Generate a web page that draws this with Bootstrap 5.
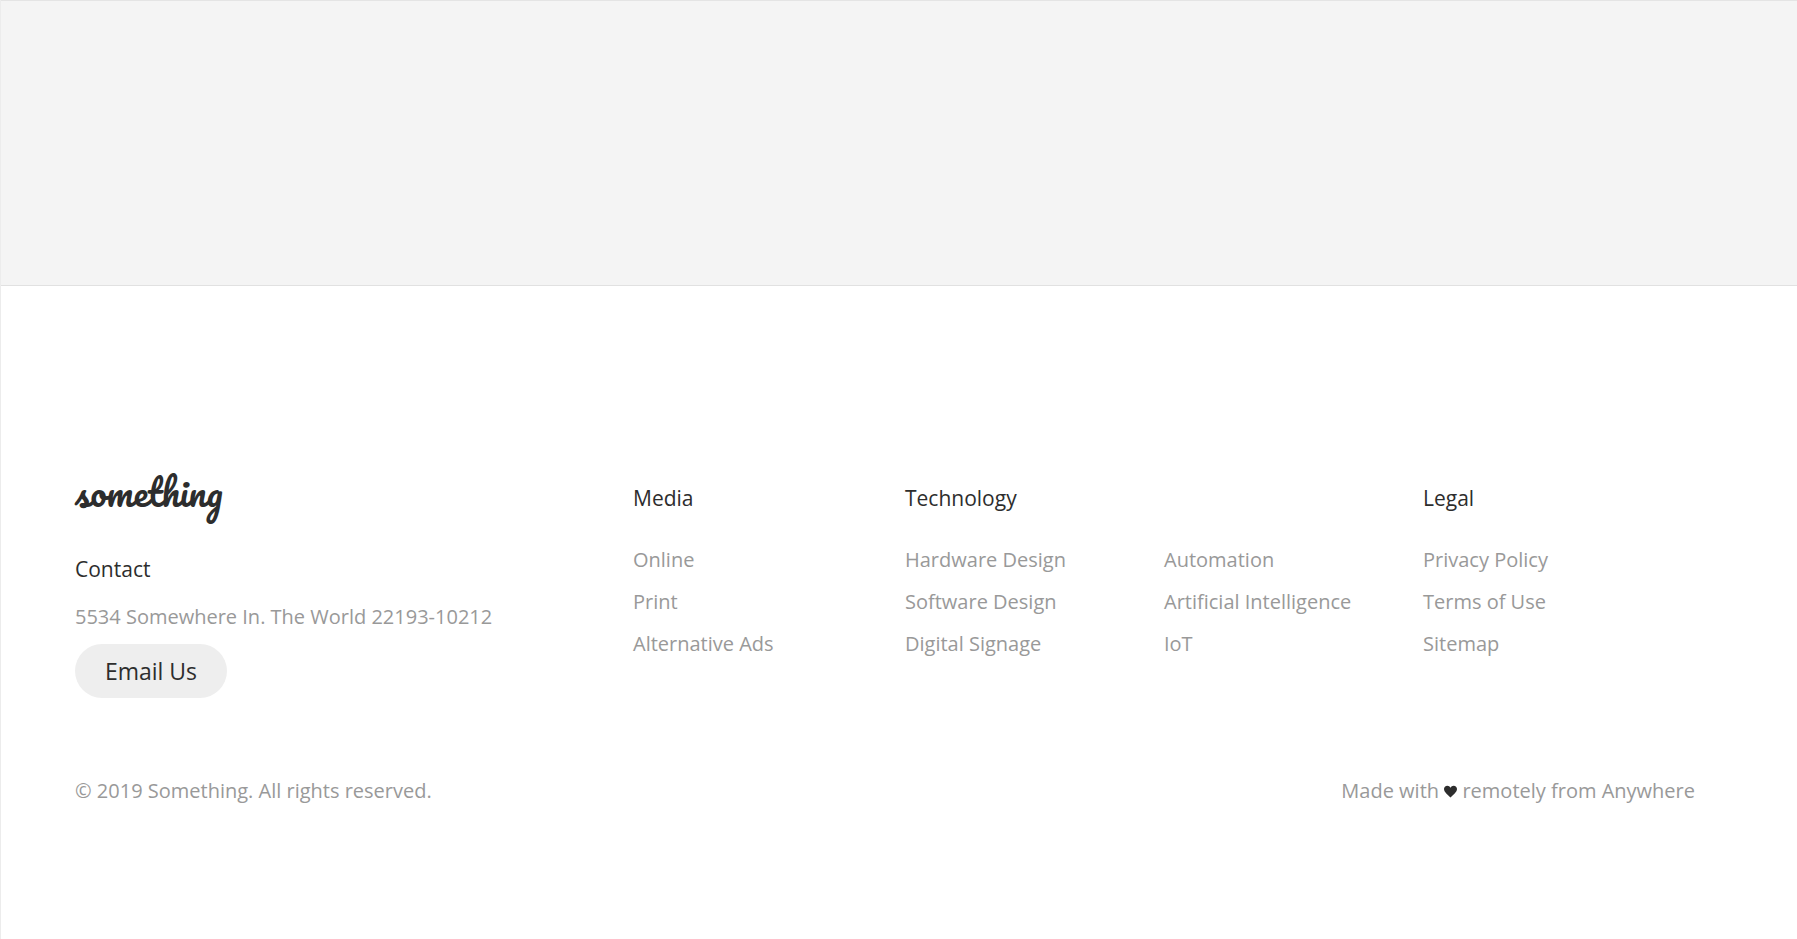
<!DOCTYPE html>
<html lang="en">
<head>
<meta charset="utf-8">
<meta name="viewport" content="width=device-width, initial-scale=1">
<title>Something</title>
<link href="https://cdn.jsdelivr.net/npm/bootstrap@5.3.0/dist/css/bootstrap.min.css" rel="stylesheet">
<style>
  body { font-family: "Segoe UI", "Open Sans", sans-serif; font-size: 20px; line-height: 42px; color: #999; background: #fff; }
  .page-frame { border-left: 1px solid #ececec; }
  .banner { height: 286px; background: #f4f4f4; border-top: 1px solid #e4e4e4; border-bottom: 1px solid #e1e1e1; }
  .site-footer { padding: 191px 102px 80px 74px; }
  .footer-grid { display: grid; grid-template-columns: 1fr; }
  .site-footer a { text-decoration: none; }
  .site-footer ul a { color: #999; }
  .site-footer ul a:hover { color: #2d2d2d; }
  .footer-title { font-size: 21px; font-weight: 400; line-height: 42px; color: #2d2d2d; }
  .footer-grid .footer-title { margin-bottom: 20px; }
  .footer-grid .contact-title { margin: 41px 0 6px; }
  .brand-name { display: block; font-family: Pacifico, Lato, cursive; font-size: 36px; font-weight: 400; line-height: 30px; color: #2d2d2d; }
  .address { margin-bottom: 6px; }
  .btn-email { min-width: 152px; font-size: 23px; line-height: 54px; color: #2d2d2d; background: #eee; }
  .btn-email:hover { background: #e2e2e2; }
  .footer-end { margin-top: 72px; }
  .heart { width: 13px; height: 13px; vertical-align: baseline; fill: #2d2d2d; }
  @media (min-width: 1200px) {
    .footer-grid { grid-template-columns: 558fr 272fr 518fr 272fr; }
  }
</style>
</head>
<body>
<div class="page-frame min-vh-100">
  <div class="banner"></div>
  <footer class="site-footer">
    <div class="footer-grid">
      <section>
        <a class="brand-name" href="#">something</a>
        <h2 class="footer-title contact-title">Contact</h2>
        <p class="address">5534 Somewhere In. The World 22193-10212</p>
        <button type="button" class="btn btn-email rounded-pill border-0 p-0">Email Us</button>
      </section>
      <nav aria-label="Media">
        <h2 class="footer-title">Media</h2>
        <ul class="list-unstyled mb-0">
          <li><a href="#">Online</a></li>
          <li><a href="#">Print</a></li>
          <li><a href="#">Alternative Ads</a></li>
        </ul>
      </nav>
      <nav aria-label="Technology">
        <h2 class="footer-title">Technology</h2>
        <div class="row g-0">
          <ul class="col-6 list-unstyled mb-0">
            <li><a href="#">Hardware Design</a></li>
            <li><a href="#">Software Design</a></li>
            <li><a href="#">Digital Signage</a></li>
          </ul>
          <ul class="col-6 list-unstyled mb-0">
            <li><a href="#">Automation</a></li>
            <li><a href="#">Artificial Intelligence</a></li>
            <li><a href="#">IoT</a></li>
          </ul>
        </div>
      </nav>
      <nav aria-label="Legal">
        <h2 class="footer-title">Legal</h2>
        <ul class="list-unstyled mb-0">
          <li><a href="#">Privacy Policy</a></li>
          <li><a href="#">Terms of Use</a></li>
          <li><a href="#">Sitemap</a></li>
        </ul>
      </nav>
    </div>
    <div class="footer-end d-flex flex-wrap justify-content-between">
      <span>© 2019 Something. All rights reserved.</span>
      <span>Made with <svg class="heart" viewBox="0 0 13 13" role="img" aria-label="love"><path d="M6.5 12.6C4.6 10.2 0 7.4 0 4 0 2 1.5.7 3.3.7 4.7.7 5.900 1.500 6.500 2.800 7.100 1.500 8.300.7 9.700.7 11.500.7 13 2 13 4 13 7.400 8.400 10.200 6.500 12.600Z"/></svg> remotely from Anywhere</span>
    </div>
  </footer>
</div>
<script src="https://cdn.jsdelivr.net/npm/bootstrap@5.3.0/dist/js/bootstrap.bundle.min.js"></script>
</body>
</html>
